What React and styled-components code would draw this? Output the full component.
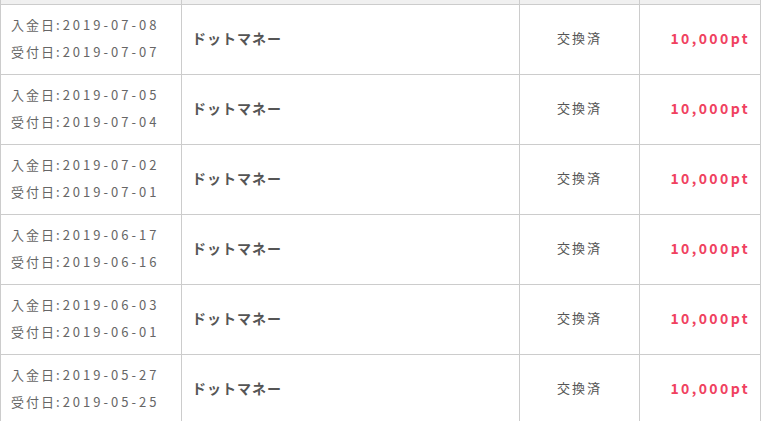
import React from "react";
import styled, { createGlobalStyle } from "styled-components";

const Global = createGlobalStyle`
  html, body { margin: 0; padding: 0; background: #fff; }
  body { font-family: "Noto Sans CJK JP", "Noto Sans", sans-serif; color: #555; }
`;

const Table = styled.table`
  width: 760px;
  border-collapse: collapse;
  table-layout: fixed;
`;

const HeadCell = styled.th`
  height: 4px;
  padding: 0;
  background: #f0f0f0;
  border: 1px solid #ccc;
  border-top: none;
`;

const Cell = styled.td`
  border: 1px solid #ccc;
  height: 70px;
  padding: 0 10px 4px;
  box-sizing: border-box;
  vertical-align: middle;
  font-size: 13px;
  letter-spacing: 2px;
  color: #555;
  text-align: ${(p) => p.$align || "left"};
`;

const DateLine = styled.div`
  line-height: 27px;
  white-space: nowrap;
  color: #666;
`;

const DateValue = styled.span`
  letter-spacing: 3px;
`;

const Name = styled.span`
  font-weight: bold;
  font-size: 14px;
  letter-spacing: 1px;
  color: #555;
`;

const Points = styled.span`
  font-weight: bold;
  font-size: 14px;
  color: #f0415f;
  letter-spacing: 2.4px;
`;

const rows = [
  ["2019-07-08", "2019-07-07"],
  ["2019-07-05", "2019-07-04"],
  ["2019-07-02", "2019-07-01"],
  ["2019-06-17", "2019-06-16"],
  ["2019-06-03", "2019-06-01"],
  ["2019-05-27", "2019-05-25"],
];

export default function App() {
  return (
    <>
      <Global />
      <Table>
        <colgroup>
          <col style={{ width: 181 }} />
          <col style={{ width: 338 }} />
          <col style={{ width: 120 }} />
          <col style={{ width: 121 }} />
        </colgroup>
        <thead>
          <tr>
            <HeadCell />
            <HeadCell />
            <HeadCell />
            <HeadCell />
          </tr>
        </thead>
        <tbody>
          {rows.map(([a, b]) => (
            <tr key={a}>
              <Cell>
                <DateLine>
                  入金日<DateValue>:{a}</DateValue>
                </DateLine>
                <DateLine>
                  受付日<DateValue>:{b}</DateValue>
                </DateLine>
              </Cell>
              <Cell>
                <Name>ドットマネー</Name>
              </Cell>
              <Cell $align="center">交換済</Cell>
              <Cell $align="right">
                <Points>10,000pt</Points>
              </Cell>
            </tr>
          ))}
        </tbody>
      </Table>
    </>
  );
}
